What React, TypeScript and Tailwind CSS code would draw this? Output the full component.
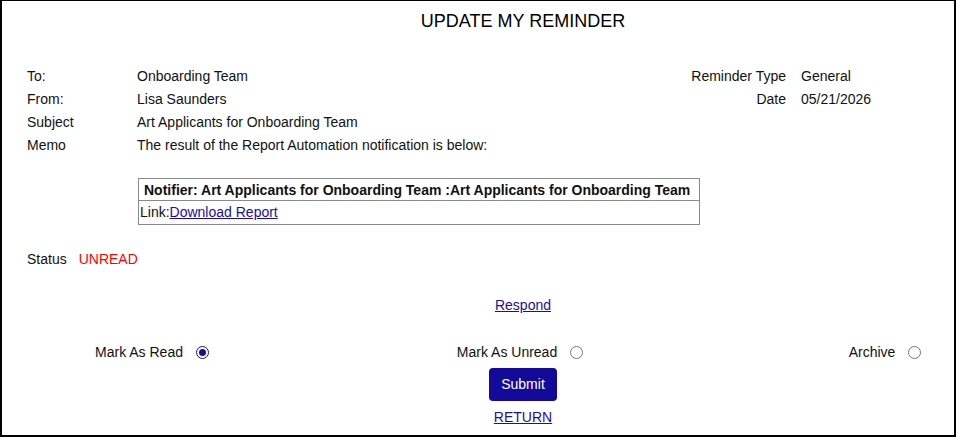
import React from "react";

function Radio({ checked }: { checked?: boolean }) {
  return checked ? (
    <span className="inline-flex h-[13px] w-[13px] items-center justify-center rounded-full border-[1.5px] border-[#1a0d9e] bg-white">
      <span className="h-[7px] w-[7px] rounded-full bg-[#1a0d9e]" />
    </span>
  ) : (
    <span className="inline-block h-[13px] w-[13px] rounded-full border border-[#767676] bg-white" />
  );
}

export default function App() {
  return (
    <div className="h-[437px] w-[956px] overflow-hidden border-2 border-t border-black bg-white font-['Liberation_Sans',Arial,sans-serif] text-[14px] leading-[23px] text-[#111]">
      <div className="w-[1042px]">
        <div className="mt-[9px] text-center text-[18px] leading-[22px] text-black">UPDATE MY REMINDER</div>

        <div className="mt-[33px] grid grid-cols-[110px_501px_148px_auto] pl-[25px]">
          <div>To:</div>
          <div>Onboarding Team</div>
          <div className="text-right">Reminder Type</div>
          <div className="pl-[15px]">General</div>

          <div>From:</div>
          <div>Lisa Saunders</div>
          <div className="text-right">Date</div>
          <div className="pl-[15px]">05/21/2026</div>

          <div>Subject</div>
          <div>Art Applicants for Onboarding Team</div>
          <div />
          <div />

          <div>Memo</div>
          <div>The result of the Report Automation notification is below:</div>
          <div />
          <div />
        </div>

        <div className="ml-[136px] mt-[21px] w-[562px] border border-[#8a8a8a]">
          <div className="h-[22px] border-b border-[#8a8a8a] pl-[5px] font-bold leading-[22px]">
            Notifier: Art Applicants for Onboarding Team :Art Applicants for Onboarding Team
          </div>
          <div className="h-[23px] pl-[1px] leading-[23px]">
            Link:<span className="text-[#1a0dab] underline">Download Report</span>
          </div>
        </div>

        <div className="mt-[24px] flex pl-[25px] leading-[20px]">
          <span>Status</span>
          <span className="ml-[12px] text-[#ff0000]">UNREAD</span>
        </div>

        <div className="mt-[26px] text-center leading-[20px]">
          <span className="text-[#1a0dab] underline">Respond</span>
        </div>

        <div className="mt-[27px] grid grid-cols-[300px_436px_294px] leading-[20px]">
          <div className="flex items-center justify-center gap-[13px]">
            <span>Mark As Read</span>
            <Radio checked />
          </div>
          <div className="flex items-center justify-center gap-[13px]">
            <span>Mark As Unread</span>
            <Radio />
          </div>
          <div className="flex items-center justify-center gap-[13px]">
            <span>Archive</span>
            <Radio />
          </div>
        </div>

        <div className="mt-[6px] flex justify-center">
          <button className="h-[33px] w-[68px] rounded-[4px] bg-[#140a99] text-[14px] text-white">Submit</button>
        </div>

        <div className="mt-[6px] text-center leading-[20px]">
          <span className="text-[#1a0dab] underline">RETURN</span>
        </div>
      </div>
    </div>
  );
}
